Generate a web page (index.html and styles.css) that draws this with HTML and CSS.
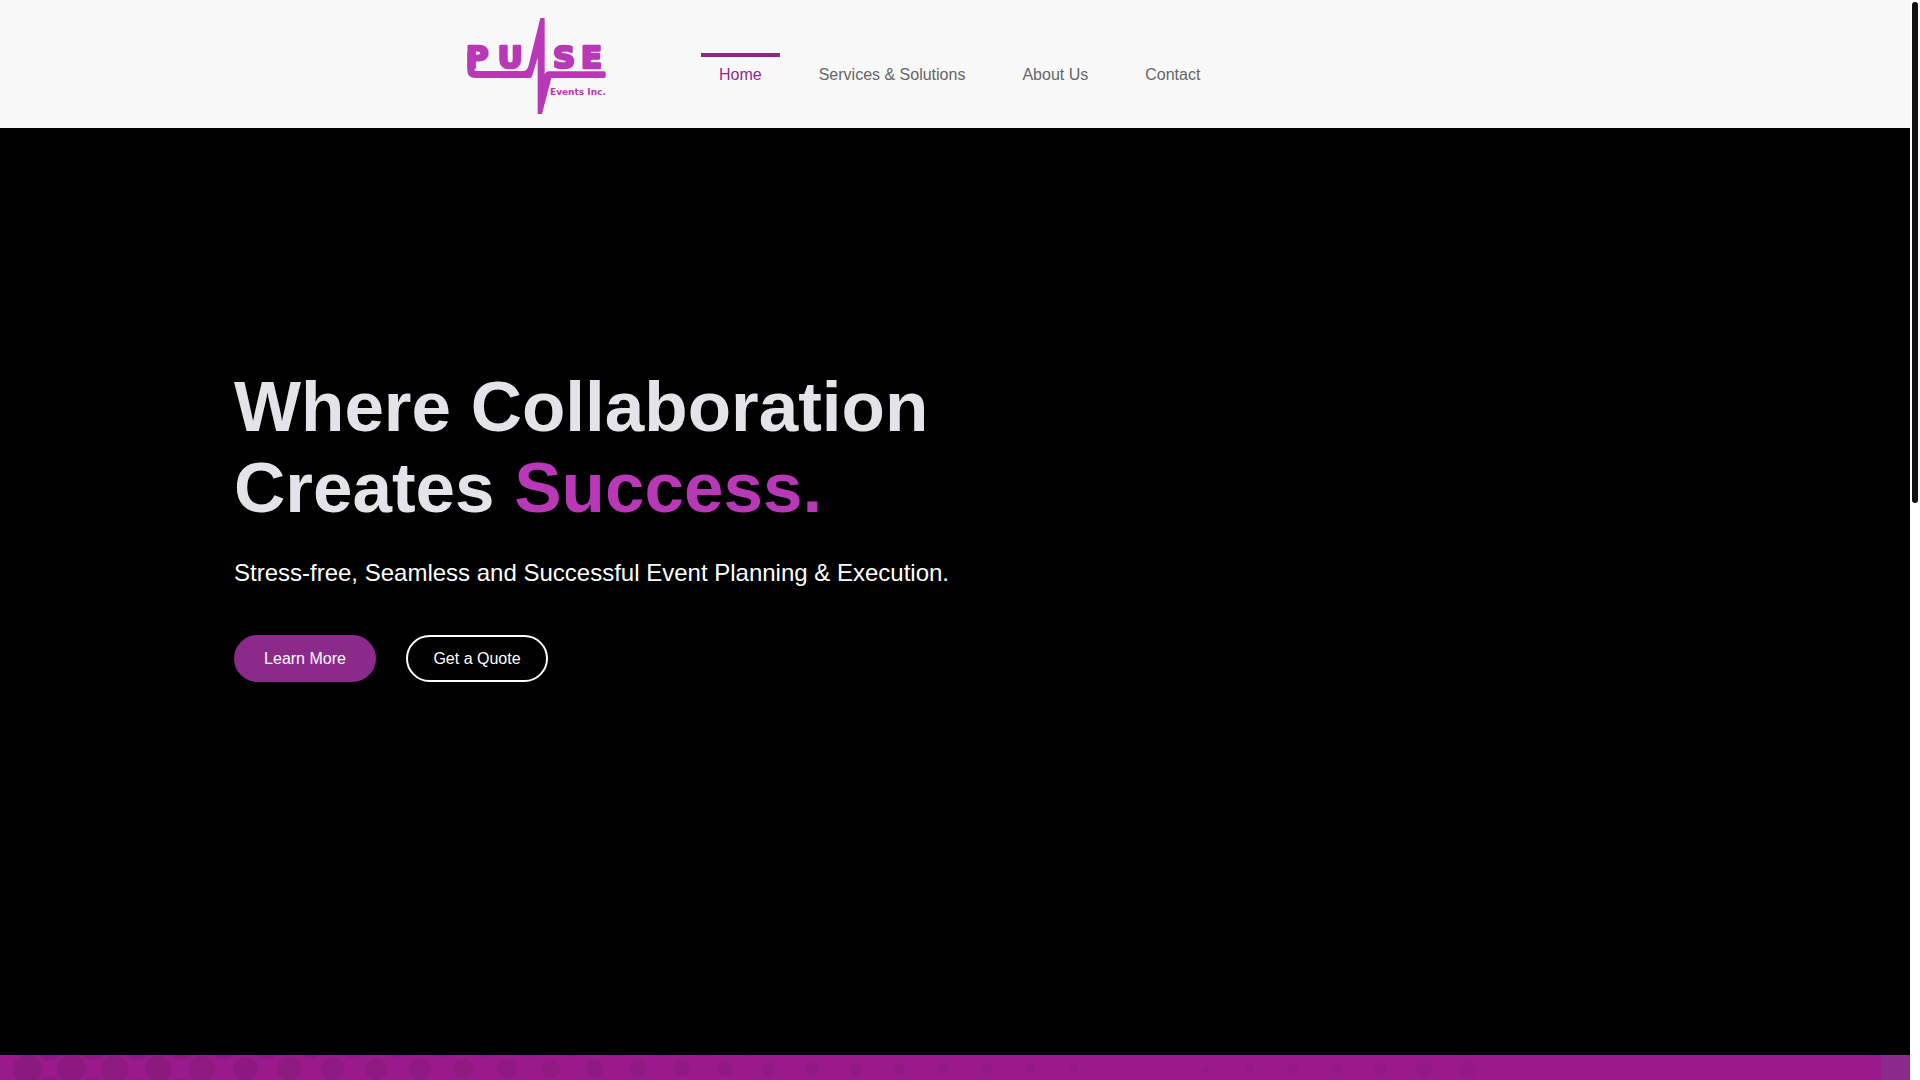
FILE: index.html
```
<!DOCTYPE html>
<html lang="en">
<head>
    <meta charset="UTF-8">
    <meta name="viewport" content="width=device-width, initial-scale=1.0">
    <title>Pulse Events Inc.</title>
    <link rel="stylesheet" href="styles.css">
</head>
<body>
    <div class="page">
        <header>
            <a href="/" class="logo" aria-label="Pulse Events Inc.">
                <svg viewBox="36 39 417 288">
                    <!-- heartbeat line running under the letters -->
                    <path class="fill" d="M37 142V196Q37 219 62 219H224Q229 219 231 214L248 158V327H261L289 219H448Q452 219 452 214V204Q452 199 447 199H279Q272 200 269 208V39H256L221 181Q216 198 207 198H66Q57 198 57 190V142Z"/>
                    <text class="word" y="188" x="33 128">PU</text>
                    <text class="word" y="188" x="294 378">SE</text>
                    <text class="tag" x="285" y="269">Events Inc.</text>
                </svg>
            </a>
            <nav>
                <a href="/" class="active">Home</a>
                <a href="/services">Services &amp; Solutions</a>
                <a href="/about">About Us</a>
                <a href="/contact">Contact</a>
            </nav>
        </header>

        <main class="hero">
            <h1>Where Collaboration<br>Creates <span>Success.</span></h1>
            <p>Stress-free, Seamless and Successful Event Planning &amp; Execution.</p>
            <div class="buttons">
                <button type="button" class="btn filled">Learn More</button>
                <button type="button" class="btn">Get a Quote</button>
            </div>
        </main>

        <section class="band">
            <svg id="dots" class="dots" aria-hidden="true"></svg>
            <button type="button" class="to-top" aria-label="Back to top"></button>
        </section>
    </div>

    <div class="scrollbar">
        <div class="thumb"></div>
    </div>

    <script src="script.js"></script>
</body>
</html>
```

FILE: styles.css
```
* {
    box-sizing: border-box;
}

body {
    font-family: 'Liberation Sans', Arial, sans-serif;
    font-size: 16px;
    background: #fff;
    height: 100vh;
    display: flex;
    margin: 0;
    overflow: hidden;
}

.page {
    flex: 1;
    display: flex;
    flex-direction: column;
}

header {
    display: flex;
    align-items: flex-start;
    gap: 95px;
    background: #f8f8f8;
    padding: 18px 20px 14px 24.45%;
}

.logo svg {
    display: block;
    width: 139px;
    height: 96px;
    overflow: visible;
}

.fill,
.word,
.tag {
    fill: #b838b8;
}

.word {
    font-family: 'DejaVu Sans', sans-serif;
    font-weight: bold;
    font-size: 92px;
    stroke: #b838b8;
    stroke-width: 8px;
    stroke-linejoin: round;
}

.tag {
    font-family: 'DejaVu Sans', sans-serif;
    font-weight: bold;
    font-size: 27px;
}

nav {
    display: flex;
    gap: 21px;
    padding-top: 35px;
}

nav a {
    color: #666;
    text-decoration: none;
    line-height: 24px;
    padding: 6px 18px;
    border-top: 4px solid transparent;
}

nav a.active {
    color: #8b2a8b;
    border-top-color: #8b2a8b;
}

.hero {
    flex: 1;
    background: #000;
    padding: 238px 20px 40px 234px;
}

h1 {
    font-size: 71px;
    line-height: 81px;
    margin: 0 0 31px;
    color: #e5e3ea;
}

h1 span {
    color: #b838b8;
}

p {
    font-size: 24px;
    line-height: 28px;
    margin: 0 0 48px;
    color: #fff;
}

.buttons {
    display: flex;
    gap: 30px;
}

.btn {
    font-family: inherit;
    font-size: 16px;
    width: 142px;
    height: 47px;
    padding: 0;
    color: #fff;
    background: transparent;
    border: 2px solid #fff;
    border-radius: 24px;
    cursor: pointer;
}

.btn.filled {
    background: #8b2a8b;
    border-color: #8b2a8b;
}

.band {
    position: relative;
    height: 25px;
    background: #9a198b;
}

.dots {
    display: block;
    width: 100%;
    height: 25px;
    fill: #8b1a80;
}

.to-top {
    position: absolute;
    top: 0;
    right: 0;
    width: 29px;
    height: 25px;
    padding: 0;
    border: none;
    background: #8b2a8b;
}

.scrollbar {
    width: 10px;
    padding: 2px;
    background: #fff;
}

.thumb {
    height: 46.6%;
    background: #111;
    border-radius: 3px;
}
```

FILE: script.js
```
// Halftone dots of the purple band: they shrink to the middle, then grow a little again
const dots = document.getElementById('dots');
const step = 43.6;

function addDot(x, y, r, opacity) {
    const dot = document.createElementNS('http://www.w3.org/2000/svg', 'circle');
    dot.setAttribute('cx', x);
    dot.setAttribute('cy', y);
    dot.setAttribute('r', r);
    dot.setAttribute('opacity', opacity);
    dots.appendChild(dot);
}

for (let i = 0; i < 25; i++) {
    const x = 27.5 + i * step;
    addDot(x, 14, 14.5 - i * 0.45, 1 - i * 0.02);
    if (i < 19) {
        addDot(x + step / 2, -8, 13.5 - i * 0.3, 0.9 - i * 0.02);
    }
    if (i < 4) {
        addDot(x + step / 2, 36, 14.5 - i * 0.8, 0.8);
    }
}

for (let i = 0; i < 7; i++) {
    addDot(1206 + i * step, 14, 3 + i * 0.9, 0.4);
}
```
